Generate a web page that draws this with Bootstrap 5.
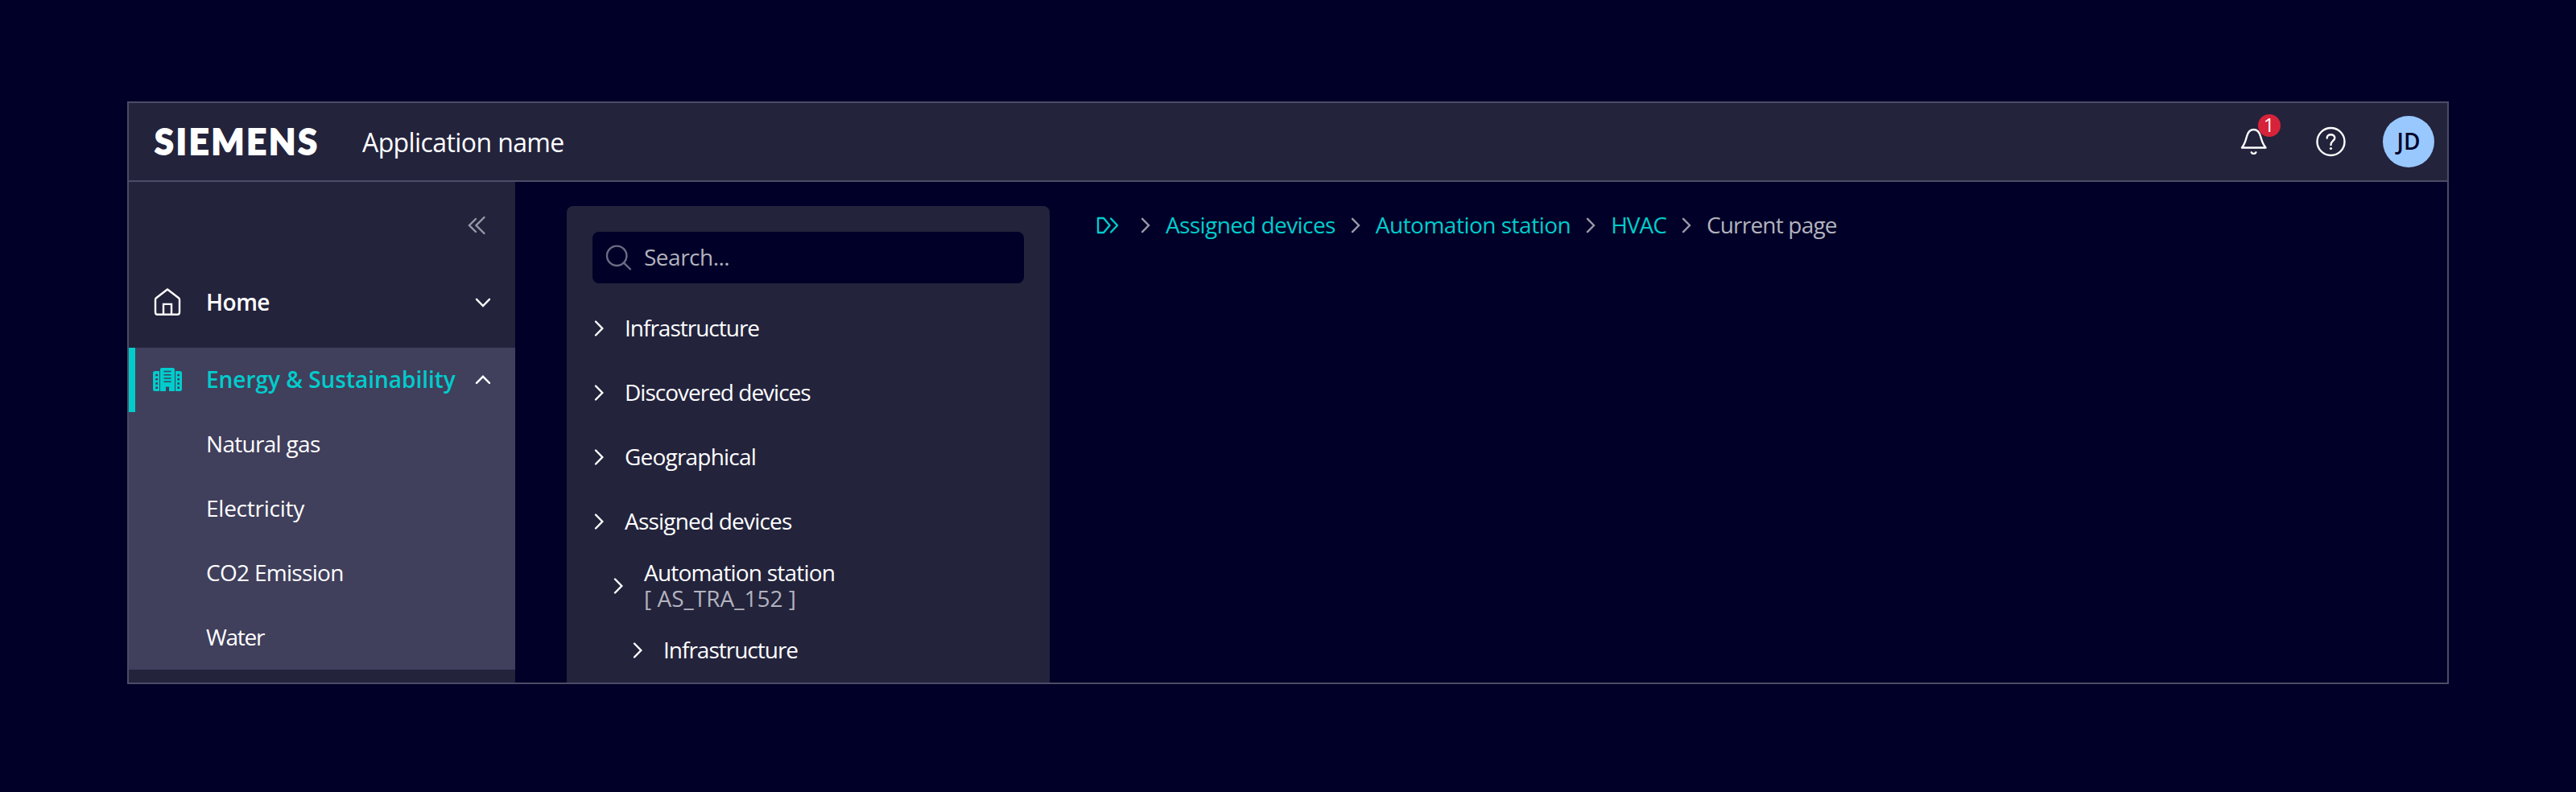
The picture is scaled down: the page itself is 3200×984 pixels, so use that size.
<!DOCTYPE html>
<html lang="en" data-bs-theme="dark">
<head>
<meta charset="utf-8">
<meta name="viewport" content="width=device-width, initial-scale=1">
<title>Application name</title>
<link href="https://cdn.jsdelivr.net/npm/bootstrap@5.3.0/dist/css/bootstrap.min.css" rel="stylesheet">
<style>
  :root {
    --base-0: #000028;
    --base-1: #23233c;
    --base-selected: #403f5c;
    --line: #4c4c68;
    --accent: #00cccc;
    --muted: #b3b3be;
    --icon-muted: #9999a9;
  }
  body {
    background: var(--base-0);
    color: #fff;
    font: 400 28px/32px "Open Sans", "Noto Sans", sans-serif;
    overflow: hidden;
  }
  svg { display: block; flex: none; fill: none; stroke: currentColor; stroke-width: 2.4; stroke-linecap: round; }
  a { color: inherit; text-decoration: none; }
  .shell { margin: 126px 158px; height: 724px; border: 2px solid var(--line); }
  .topbar { height: 98px; padding-left: 32px; background: var(--base-1); border-bottom: 2px solid var(--line); }
  .logo { width: 258px; font: 900 43px/60px Lato, sans-serif; letter-spacing: 3px; -webkit-text-stroke: 1.8px #fff; }
  .app-title { font-size: 32px; letter-spacing: -.6px; margin-top: 1px; }
  .tool { width: 96px; height: 96px; }
  .counter { position: absolute; left: 53px; top: 14px; width: 28px; height: 28px; background: #d72339; font-size: 24px; line-height: 26px; text-align: center; padding-right: 1px; }
  .avatar { width: 64px; height: 64px; background: #99c8ff; color: var(--base-0); font-weight: 600; }
  .txt { white-space: nowrap; margin-top: -2px; }

  .sidebar { width: 480px; flex: none; background: var(--base-1); }
  .collapse-row { height: 110px; padding: 0 34px 2px 0; color: var(--icon-muted); }
  .side-item { height: 80px; padding-left: 28px; font-weight: 600; }
  .side-item .txt { flex: 1; margin-left: 28px; }
  .side-item .toggle { margin-right: 24px; }
  .side-item.active { color: var(--accent); border-left: 8px solid var(--accent); padding-left: 20px; letter-spacing: -.02px; }
  .side-item.active .toggle { color: #fff; }
  .side-group { background: var(--base-selected); margin-top: 16px; }
  .side-sub { height: 80px; padding-left: 96px; }

  .tree-panel { width: 600px; flex: none; margin: 30px 0 0 64px; padding: 32px 32px 0; background: var(--base-1); border-radius: 8px 8px 0 0; }
  .search { height: 64px; background: var(--base-0); border-radius: 8px; color: var(--muted); margin-bottom: 16px; }
  .search svg { color: #6c6c84; }
  .tree-row { height: 80px; }
  .lvl-2 { padding-left: 24px; }
  .lvl-3 { padding-left: 48px; }
  .muted { color: var(--muted); }

  .trail { margin: 34px 0 0 54px; height: 40px; color: var(--accent); }
  .trail .sep { color: var(--icon-muted); }

  .t-02 { letter-spacing: -.25px; } .t-05 { letter-spacing: -.5px; } .t-06 { letter-spacing: -.6px; } .t-07 { letter-spacing: -.7px; }
  .t-08 { letter-spacing: -.8px; } .t-09 { letter-spacing: -1px; } .t-10 { letter-spacing: -1px; } .t-17 { letter-spacing: -1.3px; }
</style>
</head>
<body>
<svg class="d-none">
  <symbol id="chev" viewBox="0 0 40 32"><path d="M4 7.5 12.3 16 4 24.5"/></symbol>
  <symbol id="sep" viewBox="0 0 50 32"><path d="M21 7.8 29 16 21 24.2"/></symbol>
</svg>
<div class="shell d-flex flex-column">
  <header class="topbar d-flex align-items-center">
    <div class="logo">SIEMENS</div>
    <div class="app-title">Application name</div>
    <div class="d-flex ms-auto">
      <a href="#" class="tool position-relative" aria-label="Notifications">
        <svg width="96" height="96"><path stroke-linejoin="round" d="M33 55.5H62.5C59 51 57.6 47 56.3 42C54.8 36.2 52.3 33 47.6 33S40.400 36.200 38.900 42C37.600 47 36.500 51 33 55.500Z"/><path d="M44.800 61.300C46 63.400 49.200 63.400 50.400 61.300"/></svg>
        <span class="counter rounded-circle">1</span>
      </a>
      <a href="#" class="tool" aria-label="Help">
        <svg width="96" height="96"><circle cx="47.500" cy="48" r="17"/><path d="M42.700 43.500C42.700 37.800 52.300 37.800 52.300 43.300C52.300 47 47.500 47 47.500 52"/><circle cx="47.500" cy="56.500" r="1.600" fill="currentColor" stroke="none"/></svg>
      </a>
      <div class="tool d-flex align-items-center justify-content-center">
        <div class="avatar rounded-circle d-flex align-items-center justify-content-center"><span class="txt">JD</span></div>
      </div>
    </div>
  </header>
  <div class="d-flex flex-grow-1 overflow-hidden">
    <nav class="sidebar">
      <div class="collapse-row d-flex align-items-center justify-content-end">
        <svg width="28" height="32"><path d="M23.500 6 13.500 16 23.500 26M13 8 5 16 13 24"/></svg>
      </div>
      <a href="#" class="side-item d-flex align-items-center">
        <svg width="40" height="40" stroke-linejoin="round"><path d="M20 3.500 34 14.300Q35 15.100 35 16.500V32Q35 34.700 32.300 34.700H7.700Q5 34.700 5 32V16.500Q5 15.100 6 14.300Z"/><path d="M15 34.500V21.900H25V34.500" stroke-linejoin="miter"/></svg>
        <span class="txt t-05">Home</span>
        <svg class="toggle" width="32" height="32"><path d="M8 11.800 16 20 24 11.800"/></svg>
      </a>
      <div class="side-group">
        <a href="#" class="side-item active d-flex align-items-center">
          <svg width="40" height="40"><g fill="currentColor" stroke="none" fill-rule="evenodd"><path d="M4.500 9H10V34H4.500Q2 34 2 31.500V11.500Q2 9 4.500 9ZM5.300 12.700V15.200H8V12.700ZM5.300 18V20.500H8V18ZM5.300 23.300V25.800H8V23.300ZM5.300 28.500V31H8V28.500Z"/><path d="M30 9H35.500Q38 9 38 11.500V31.500Q38 34 35.500 34H30ZM32.300 12.700V15.200H35V12.700ZM32.300 18V20.500H35V18ZM32.300 23.300V25.800H35V23.300ZM32.300 28.500V31H35V28.500Z"/><path d="M13 5H27Q29 5 29 7V34H22V28.500H18V34H11V7Q11 5 13 5ZM15.500 8.700V10.300H24.500V8.700ZM15.500 13V14.600H24.500V13ZM15.500 17.200V18.800H24.500V17.200ZM15.500 21.400V23H24.500V21.400Z"/></g></svg>
          <span class="txt">Energy &amp; Sustainability</span>
          <svg class="toggle" width="32" height="32"><path d="M8 19.900 16 11.800 24 19.900"/></svg>
        </a>
        <a href="#" class="side-sub d-flex align-items-center"><span class="txt t-07">Natural gas</span></a>
        <a href="#" class="side-sub d-flex align-items-center"><span class="txt t-02">Electricity</span></a>
        <a href="#" class="side-sub d-flex align-items-center"><span class="txt t-07">CO2 Emission</span></a>
        <a href="#" class="side-sub d-flex align-items-center"><span class="txt t-17">Water</span></a>
      </div>
    </nav>
    <section class="tree-panel">
      <div class="search d-flex align-items-center">
        <svg width="64" height="64"><circle cx="30.200" cy="29.800" r="12.200"/><path d="M39 38.700 47 46.500"/></svg>
        <span class="txt t-05">Search...</span>
      </div>
      <div class="tree-row d-flex align-items-center"><svg width="40" height="32"><use href="#chev"/></svg><span class="txt t-09">Infrastructure</span></div>
      <div class="tree-row d-flex align-items-center"><svg width="40" height="32"><use href="#chev"/></svg><span class="txt t-10">Discovered devices</span></div>
      <div class="tree-row d-flex align-items-center"><svg width="40" height="32"><use href="#chev"/></svg><span class="txt t-08">Geographical</span></div>
      <div class="tree-row d-flex align-items-center"><svg width="40" height="32"><use href="#chev"/></svg><span class="txt t-08">Assigned devices</span></div>
      <div class="tree-row lvl-2 d-flex align-items-center"><svg width="40" height="32"><use href="#chev"/></svg><div class="txt"><div class="t-08">Automation station</div><div class="muted">[ AS_TRA_152 ]</div></div></div>
      <div class="tree-row lvl-3 d-flex align-items-center"><svg width="40" height="32"><use href="#chev"/></svg><span class="txt t-09">Infrastructure</span></div>
    </section>
    <main class="flex-grow-1">
      <nav class="trail d-flex align-items-center">
        <svg width="40" height="32" stroke-linejoin="round"><path d="M6 7H13L20.500 16 13 25H6ZM22 7.500 30 16 22 24.500"/></svg>
        <svg class="sep" width="50" height="32"><use href="#sep"/></svg><a href="#" class="txt t-06">Assigned devices</a>
        <svg class="sep" width="50" height="32"><use href="#sep"/></svg><a href="#" class="txt t-05">Automation station</a>
        <svg class="sep" width="50" height="32"><use href="#sep"/></svg><a href="#" class="txt t-10">HVAC</a>
        <svg class="sep" width="50" height="32"><use href="#sep"/></svg><span class="txt muted t-08">Current page</span>
      </nav>
    </main>
  </div>
</div>
<script src="https://cdn.jsdelivr.net/npm/bootstrap@5.3.0/dist/js/bootstrap.bundle.min.js"></script>
</body>
</html>
